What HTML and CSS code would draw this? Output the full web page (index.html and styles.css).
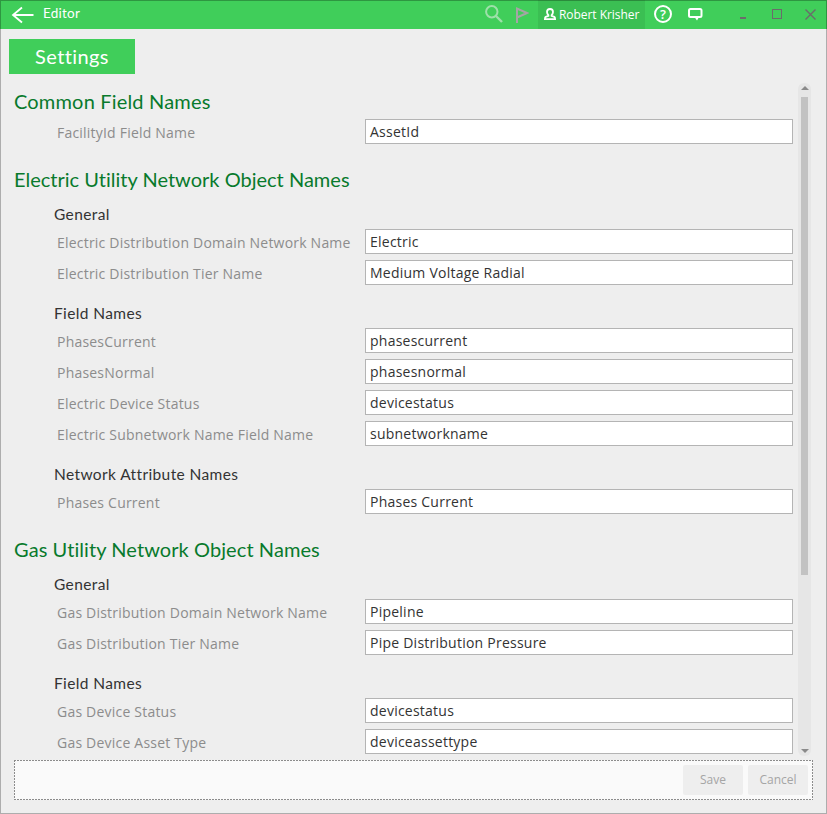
FILE: index.html
```html
<!DOCTYPE html>
<html lang="en">
<head>
<meta charset="utf-8">
<title>Editor</title>
<link rel="stylesheet" href="styles.css">
</head>
<body>
<div class="window">
  <header class="titlebar">
    <svg class="back" width="24" height="18" viewBox="0 0 24 18"><path d="M11 1.500 2 9l9 7.500M2 9h20.500" fill="none" stroke="#fff" stroke-width="1.800"/></svg>
    <span class="app-title">Editor</span>
    <svg class="search" width="18" height="18" viewBox="0 0 18 18"><g fill="none" stroke="#9ee0aa"><circle cx="6.800" cy="6.800" r="5.700" stroke-width="2"/><path d="m11 11 6 6" stroke-width="2.400"/></g></svg>
    <svg class="flag" width="14" height="18" viewBox="0 0 14 18"><path d="M2 17V2.500l10 4.500L2 11.500" fill="none" stroke="#a5a5a5" stroke-width="2"/></svg>
    <div class="user">
      <svg width="12" height="13" viewBox="0 0 12 13"><path d="M6 1c1.900 0 3 1.300 3 3.100 0 1.500-.6 2.400-1.400 3.100v.7l2.700 1c.6.300.8.900.8 2.300H.9c0-1.400.2-2 .8-2.300l2.700-1v-.7C3.600 6.500 3 5.600 3 4.100 3 2.300 4.100 1 6 1z" fill="none" stroke="#fff" stroke-width="1.800"/></svg>
      <span>Robert Krisher</span>
    </div>
    <div class="help"><span>?</span></div>
    <svg class="chat" width="15" height="14" viewBox="0 0 15 14"><rect x="1" y="2" width="12.500" height="8" rx="1.500" fill="none" stroke="#fff" stroke-width="2"/><path d="M6.500 10h4.500L9 13.500z" fill="#fff"/></svg>
    <span class="minimize"></span>
    <span class="maximize"></span>
    <svg class="close" width="11" height="11" viewBox="0 0 11 11"><path d="m.5.5 10 10m0-10-10 10" stroke="#6b6b6b" stroke-width="1.400"/></svg>
  </header>

  <div class="tab">Settings</div>

  <div class="content">
    <main class="form">
      <h2 class="h-common">Common Field Names</h2>
      <div class="row"><label>FacilityId Field Name</label><div class="field">AssetId</div></div>

      <h2 class="h-elec">Electric Utility Network Object Names</h2>
      <h3>General</h3>
      <div class="row"><label>Electric Distribution Domain Network Name</label><div class="field">Electric</div></div>
      <div class="row"><label>Electric Distribution Tier Name</label><div class="field">Medium Voltage Radial</div></div>
      <h3>Field Names</h3>
      <div class="row"><label>PhasesCurrent</label><div class="field">phasescurrent</div></div>
      <div class="row"><label>PhasesNormal</label><div class="field">phasesnormal</div></div>
      <div class="row"><label>Electric Device Status</label><div class="field">devicestatus</div></div>
      <div class="row"><label>Electric Subnetwork Name Field Name</label><div class="field">subnetworkname</div></div>
      <h3>Network Attribute Names</h3>
      <div class="row"><label>Phases Current</label><div class="field">Phases Current</div></div>

      <h2 class="h-gas">Gas Utility Network Object Names</h2>
      <h3>General</h3>
      <div class="row"><label>Gas Distribution Domain Network Name</label><div class="field">Pipeline</div></div>
      <div class="row"><label>Gas Distribution Tier Name</label><div class="field">Pipe Distribution Pressure</div></div>
      <h3>Field Names</h3>
      <div class="row"><label>Gas Device Status</label><div class="field">devicestatus</div></div>
      <div class="row"><label>Gas Device Asset Type</label><div class="field">deviceassettype</div></div>
    </main>
    <div class="scrollbar">
      <svg width="8" height="4" viewBox="0 0 8 4"><path d="M4 0 8 4H0z" fill="#8a8a8a"/></svg>
      <div class="thumb"></div>
      <svg class="down" width="8" height="4" viewBox="0 0 8 4"><path d="M0 0h8L4 4z" fill="#8a8a8a"/></svg>
    </div>
  </div>

  <footer class="actions">
    <div class="button">Save</div>
    <div class="button">Cancel</div>
  </footer>
</div>
</body>
</html>
```
FILE: styles.css
```css
* { box-sizing: border-box; }
body { margin: 0; font-family: "Open Sans", sans-serif; }
.window {
  position: relative;
  width: 827px;
  height: 814px;
  background: #eee;
  display: flex;
  flex-direction: column;
  overflow: hidden;
}
.window::after {
  content: "";
  position: absolute;
  inset: 0;
  border: 1px solid rgba(0, 0, 0, .27);
  pointer-events: none;
}
.titlebar {
  height: 29px;
  flex: none;
  background: #40ce5a;
  display: flex;
  align-items: center;
  padding-left: 11px;
  color: #fff;
}
.app-title {
  font: 13.5px/20px Lato, sans-serif;
  letter-spacing: .25px;
  margin: -3px 0 0 8px;
  width: 442px;
}
.search { margin-top: -2px; }
.flag { margin-left: 12px; }
.user {
  height: 29px;
  width: 107px;
  margin-left: 9px;
  padding-left: 6px;
  background: #3bbf53;
  display: flex;
  align-items: center;
  gap: 3px;
  font-size: 12px;
  letter-spacing: -.05px;
  white-space: nowrap;
}
.help {
  width: 18px;
  height: 18px;
  margin: -1px 0 0 9px;
  border: 2px solid #fff;
  border-radius: 50%;
  font-size: 13px;
  font-weight: 600;
  line-height: 14px;
  text-align: center;
}
.chat { margin: -1px 0 0 16px; }
.minimize { width: 6px; height: 2px; background: #6b6b6b; margin: 7px 0 0 37px; }
.maximize { width: 10px; height: 10px; border: 1px solid #6b6b6b; margin: -1px 0 0 26px; }
.close { margin: -1px 0 0 23px; }
.tab {
  flex: none;
  width: 126px;
  height: 35px;
  margin: 10px 0 0 9px;
  background: #40ce5a;
  color: #fff;
  font: 20px/34px Lato, sans-serif;
  letter-spacing: .4px;
  text-align: center;
}
.content {
  flex: none;
  display: flex;
  margin-top: 9px;
  height: 673px;
}
.form { width: 798px; padding: 4px 5px 0 14px; }
h2, h3 {
  margin: 0;
  font-family: Lato, sans-serif;
  font-weight: 400;
  font-variant-ligatures: none;
  white-space: nowrap;
}
h2 { font-size: 20px; line-height: 28px; color: #087a2c; margin-top: 18px; padding-bottom: 1px; }
h2:first-child { margin-top: 0; }
h3 {
  font-size: 15.500px;
  line-height: 22px;
  letter-spacing: .38px;
  color: #333;
  margin: 14px 0 0 40px;
  padding-bottom: 1px;
}
h2 + h3 { margin-top: 9px; }
.h-common { letter-spacing: .18px; }
.h-gas { letter-spacing: .08px; }
.h-elec { letter-spacing: .01px; }
.row { display: flex; height: 31px; padding: 3px 0; }
label {
  width: 308px;
  margin-left: 43px;
  font-size: 14px;
  line-height: 27px;
  letter-spacing: .21px;
  color: #8c8c8c;
  white-space: nowrap;
}
.field {
  width: 428px;
  height: 25px;
  border: 1px solid #b4b4b4;
  background: #fff;
  padding-left: 4px;
  font-size: 14px;
  line-height: 23px;
  letter-spacing: .24px;
  color: #333;
}
.scrollbar {
  width: 13px;
  height: 673px;
  border-radius: 6px;
  background: #e6e6e6;
  display: flex;
  flex-direction: column;
  align-items: center;
  padding: 3px 0;
}
.thumb { width: 7px; height: 478px; margin-top: 7px; background: #c2c2c2; }
.down { margin-top: auto; }
.actions {
  flex: none;
  width: 799px;
  height: 40px;
  margin: 4px 0 0 14px;
  padding: 5px;
  background:
    repeating-linear-gradient(90deg, #8c8c8c 0 2px, #fafafa 2px 3px) top / 100% 1px no-repeat,
    repeating-linear-gradient(90deg, #8c8c8c 0 2px, #fafafa 2px 3px) bottom / 100% 1px no-repeat,
    repeating-linear-gradient(#8c8c8c 0 2px, #fafafa 2px 3px) left / 1px 100% no-repeat,
    repeating-linear-gradient(#8c8c8c 0 2px, #fafafa 2px 3px) right / 1px 100% no-repeat,
    #fafafa;
  display: flex;
  justify-content: flex-end;
  gap: 5px;
}
.button {
  width: 60px;
  height: 30px;
  border-radius: 2px;
  background: #eee;
  color: #a5a5a5;
  font-size: 12px;
  line-height: 29px;
  text-align: center;
}
```
